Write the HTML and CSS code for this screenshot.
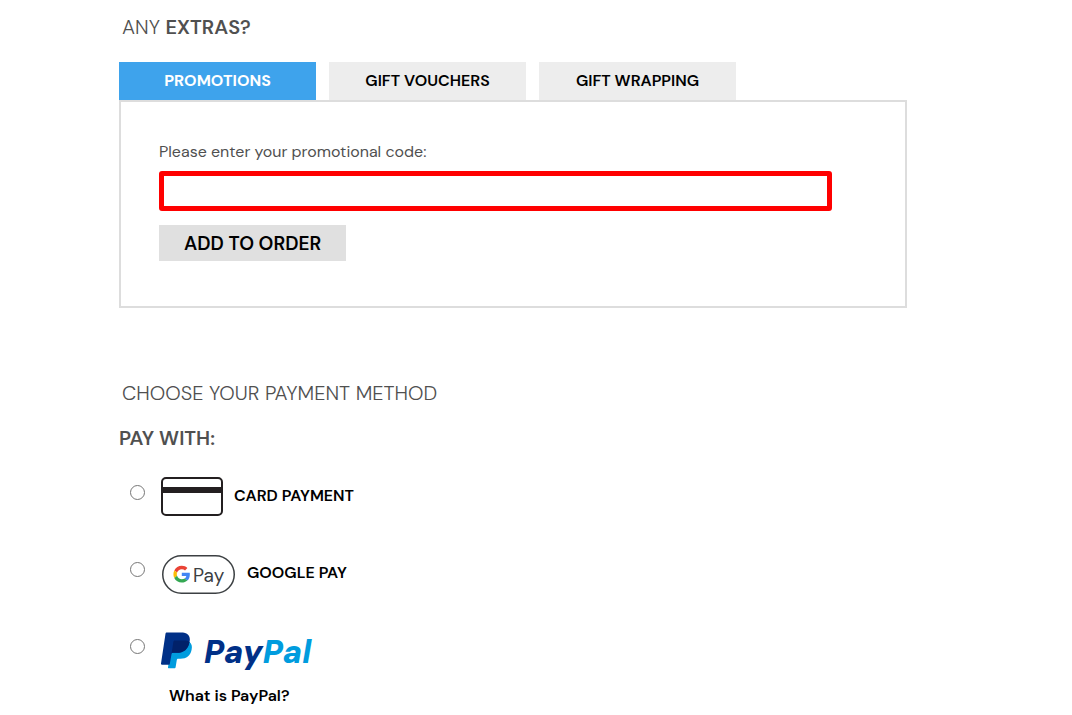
FILE: index.html
```html
<!DOCTYPE html>
<html lang="en">
<head>
  <meta charset="UTF-8" />
  <title>Checkout</title>
  <link rel="stylesheet" href="styles.css">
</head>
<body>
  <main class="checkout">
    <section class="extras">
      <h2>ANY <strong>EXTRAS?</strong></h2>
      <div class="tabs">
        <button type="button" class="tab active">PROMOTIONS</button>
        <button type="button" class="tab">GIFT VOUCHERS</button>
        <button type="button" class="tab">GIFT WRAPPING</button>
      </div>
      <form class="panel">
        <label for="promo">Please enter your promotional code:</label>
        <input type="text" id="promo" class="code">
        <button type="button" class="add">ADD TO ORDER</button>
      </form>
    </section>

    <section class="payment">
      <h2>CHOOSE YOUR PAYMENT METHOD</h2>
      <h3>PAY WITH:</h3>
      <div class="methods">
        <label class="method">
          <input type="radio" name="pay" value="card">
          <svg width="62" height="39" viewBox="0 0 62 39" aria-hidden="true">
            <rect x="1" y="1" width="60" height="37" rx="4" fill="#fff" stroke="#231f20" stroke-width="2"/>
            <path d="M1 10h60v6H1z" fill="#231f20"/>
          </svg>
          <span>CARD PAYMENT</span>
        </label>
        <label class="method">
          <input type="radio" name="pay" value="google">
          <svg width="75" height="40" viewBox="0 0 75 40" aria-hidden="true">
            <rect x="1.75" y="1.75" width="71.5" height="37.5" rx="18.75" fill="#fff" stroke="#3c4043" stroke-width="1.5"/>
            <g transform="translate(12.4 11.8) scale(.35)">
              <path fill="#ea4335" d="M24 9.500c3.540 0 6.710 1.220 9.210 3.600l6.850-6.850C35.900 2.380 30.470 0 24 0 14.620 0 6.510 5.380 2.560 13.220l7.980 6.190C12.430 13.720 17.740 9.500 24 9.500z"/>
              <path fill="#4285f4" d="M46.980 24.550c0-1.570-.15-3.090-.38-4.550H24v9.020h12.940c-.58 2.960-2.260 5.480-4.780 7.180l7.730 6c4.510-4.180 7.090-10.360 7.090-17.650z"/>
              <path fill="#fbbc05" d="M10.530 28.590c-.48-1.450-.76-2.990-.76-4.590s.27-3.140.76-4.590l-7.980-6.190C.92 16.460 0 20.120 0 24c0 3.880.92 7.540 2.560 10.780l7.970-6.190z"/>
              <path fill="#34a853" d="M24 48c6.480 0 11.930-2.130 15.890-5.810l-7.730-6c-2.150 1.450-4.920 2.300-8.160 2.300-6.260 0-11.570-4.220-13.470-9.910l-7.980 6.190C6.510 42.620 14.620 48 24 48z"/>
            </g>
            <text x="32" y="28" class="gpay">Pay</text>
          </svg>
          <span>GOOGLE PAY</span>
        </label>
        <label class="method">
          <input type="radio" name="pay" value="paypal">
          <svg width="160" height="44" viewBox="0 0 160 44" role="img" aria-label="PayPal">
            <path fill="#009cde" d="M28.500 11c2.200 1.700 2.900 4.400 2.100 7.700-1.300 6.200-5 9-11.200 9h-2.200c-.8 0-1.200.5-1.400 1.300l-1.200 7.200c-.1.700-.6 1.100-1.300 1.100H7.800c-.6 0-.9-.4-.8-1l4-25.300z"/>
            <path fill="#003087" d="M6 1.500h13.500c3.500 0 6.200.6 7.800 2.500 1.500 1.700 1.900 4.100 1.200 7-1.300 7.300-5.700 10.800-12.900 10.800h-3.500c-.9 0-1.400.4-1.600 1.400L8.800 33c-.1.500-.4.700-.9.700H1c-.7 0-1.100-.4-1-1.100L4.500 2.800C4.600 1.900 5.100 1.500 6 1.500z"/>
            <path fill="#012169" d="M28.500 11c-1.300 7.300-5.700 10.800-12.900 10.800h-3.500c-.9 0-1.400.4-1.600 1.400L12.400 10.800c.1-.9.6-1.300 1.500-1.300h9.800c2 0 3.600.5 4.800 1.500z"/>
            <text x="43" y="32" class="paypal"><tspan fill="#003087">Pay</tspan><tspan fill="#009cde">Pal</tspan></text>
          </svg>
        </label>
      </div>
      <a href="#" class="what">What is PayPal?</a>
    </section>
  </main>
</body>
</html>
```

FILE: styles.css
```css
body {
  margin: 0;
  background: #fff;
  color: #505050;
  font-family: "DM Sans", Inter, sans-serif;
  font-size: 16px;
  font-optical-sizing: none;
}

.checkout {
  width: 74%;
  max-width: 788px;
  margin-left: 119px;
  padding-top: 14px;
}

h2,
h3 {
  margin: 0;
  font-size: 20px;
  line-height: 26px;
}

h2 {
  padding-left: 3px;
  font-weight: 300;
}

h2 strong,
h3 {
  font-weight: 600;
}

button,
input {
  font-family: inherit;
}

.tabs {
  display: flex;
  gap: 13px;
  margin-top: 22px;
}

.tab {
  width: 25%;
  height: 38px;
  padding: 0 0 2px;
  border: none;
  background: #ededed;
  color: #000;
  font-size: 16px;
  font-weight: 600;
  cursor: pointer;
}

.tab.active {
  background: #3ea3ec;
  color: #fff;
  font-weight: 700;
}

.panel {
  display: flex;
  flex-direction: column;
  align-items: flex-start;
  padding: 38px 38px 45px;
  border: 2px solid #ddd;
}

.panel label {
  font-size: 16px;
  line-height: 24px;
}

.code {
  box-sizing: border-box;
  width: 95%;
  height: 40px;
  margin: 7px 0 14px;
  padding: 0 8px;
  border: 5px solid #f00;
  border-radius: 3px;
  font-size: 16px;
}

.add {
  height: 36px;
  padding: 0 25px;
  border: none;
  background: #e0e0e0;
  color: #000;
  font-size: 19px;
  font-weight: 600;
  cursor: pointer;
}

.payment {
  margin-top: 72px;
}

h3 {
  margin-top: 19px;
}

.methods {
  display: flex;
  flex-direction: column;
  gap: 37px;
  margin-top: 26px;
  padding-left: 11px;
}

.method {
  display: flex;
  align-items: flex-start;
  height: 40px;
  color: #000;
  font-size: 16px;
  font-weight: 600;
  line-height: 38px;
}

.method input {
  width: 15px;
  height: 15px;
  margin: 8px 16px 0 0;
}

.method span {
  margin-left: 11px;
}

.gpay {
  fill: #3c4043;
  font-size: 19px;
  font-weight: 400;
}

.paypal {
  font-size: 32px;
  font-style: italic;
  font-weight: 900;
}

.what {
  display: inline-block;
  margin: 15px 0 0 50px;
  color: #000;
  font-size: 16px;
  font-weight: 600;
  line-height: 20px;
  text-decoration: none;
}
```
